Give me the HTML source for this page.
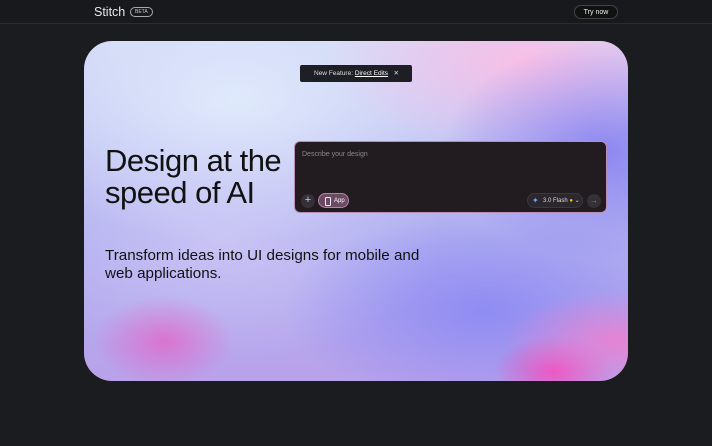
<!DOCTYPE html>
<html><head><style>
*{margin:0;padding:0;box-sizing:border-box}
body{width:712px;height:446px;background:#1b1c20;font-family:"Liberation Sans",sans-serif;position:relative;overflow:hidden}
.hdr{position:absolute;left:0;top:0;width:712px;height:24px;border-bottom:1px solid #2c2d31;background:#18191d}
.logo{position:absolute;left:94px;top:5px;color:#e8e8ea;font-size:12.5px}
.beta{position:absolute;left:130px;top:7px;border:1px solid #aaa;border-radius:6px;font-size:5px;color:#ccc;padding:1px 4px}
.try{position:absolute;left:574px;top:5px;width:44px;height:14px;border:1px solid #444;border-radius:8px;color:#eee;font-size:7px;text-align:center;line-height:13px;background:#111}
.card{position:absolute;left:84px;top:41px;width:544px;height:340px;border-radius:28px;overflow:hidden;
background:
radial-gradient(ellipse 110px 50px at 530px 300px,rgba(255,120,200,.7),transparent),
radial-gradient(ellipse 60px 35px at 470px 330px,rgba(255,60,180,.75),transparent),
radial-gradient(ellipse 70px 45px at 80px 300px,rgba(240,80,190,.6),transparent),
radial-gradient(ellipse 160px 110px at 520px 110px,rgba(120,110,240,.7),transparent),
radial-gradient(ellipse 200px 100px at 400px 270px,rgba(130,130,245,.75),transparent),
radial-gradient(ellipse 200px 90px at 440px 20px,rgba(250,190,230,.95),transparent),
radial-gradient(ellipse 260px 140px at 150px 60px,rgba(225,235,252,.95),transparent),
radial-gradient(ellipse 220px 120px at 140px 200px,rgba(205,200,245,.85),transparent),
linear-gradient(180deg,#cfd6f6,#b0aef0 60%,#b9a2ea);}
.pill{position:absolute;left:300px;top:65px;width:112px;height:17px;background:#1e1f24;border-radius:2px;color:#ddd;font-size:6.5px;line-height:17px;padding-left:14px}
.pill u{color:#fff}
h1{position:absolute;left:105px;top:145px;font-size:31px;font-weight:normal;line-height:32px;color:#111;letter-spacing:-.5px}
.sub{position:absolute;left:105px;top:247px;font-size:15.2px;line-height:18px;color:#111}
.box{position:absolute;left:294px;top:141px;width:313px;height:72px;background:#221c21;border:1px solid #b88fb8;border-radius:6px}
.ph{position:absolute;left:7px;top:9px;font-size:7px;color:#888}
.plus{position:absolute;left:6px;top:52px;width:14px;height:14px;border-radius:50%;background:#333036;color:#ccc;font-size:11px;line-height:13px;text-align:center}
.app{position:absolute;left:23px;top:51px;width:31px;height:15px;border-radius:8px;background:#6b4a63;border:1px solid #b383a9;color:#fff;font-size:6px;line-height:14px;padding-left:15px}
.app:before{content:"";position:absolute;left:6px;top:3px;width:4px;height:7px;border:1px solid #eee;border-radius:1px}
.flash{position:absolute;left:232px;top:51px;width:56px;height:15px;border-radius:8px;background:#2a272d;border:1px solid #3a373d;color:#ddd;font-size:6px;line-height:14px;padding-left:15px}
.flash:before{content:"✦";position:absolute;left:4px;top:0;color:#6fa0ff;font-size:8px;line-height:14px}
.go{position:absolute;left:292px;top:52px;width:14px;height:14px;border-radius:50%;background:#333036;color:#888;font-size:8px;line-height:14px;text-align:center}
</style></head><body>
<div class="hdr"><div class="logo">Stitch</div><div class="beta">BETA</div><div class="try">Try now</div></div>
<div class="card"></div>
<div class="pill">New Feature: <u>Direct Edits</u> &nbsp;&nbsp;✕</div>
<h1>Design at the<br>speed of AI</h1>
<div class="sub">Transform ideas into UI designs for mobile and<br>web applications.</div>
<div class="box"><div class="ph">Describe your design</div><div class="plus">+</div><div class="app">App</div><div class="flash">3.0 Flash <span style="color:#f5c518">●</span> ⌄</div><div class="go">→</div></div>
</body></html>
